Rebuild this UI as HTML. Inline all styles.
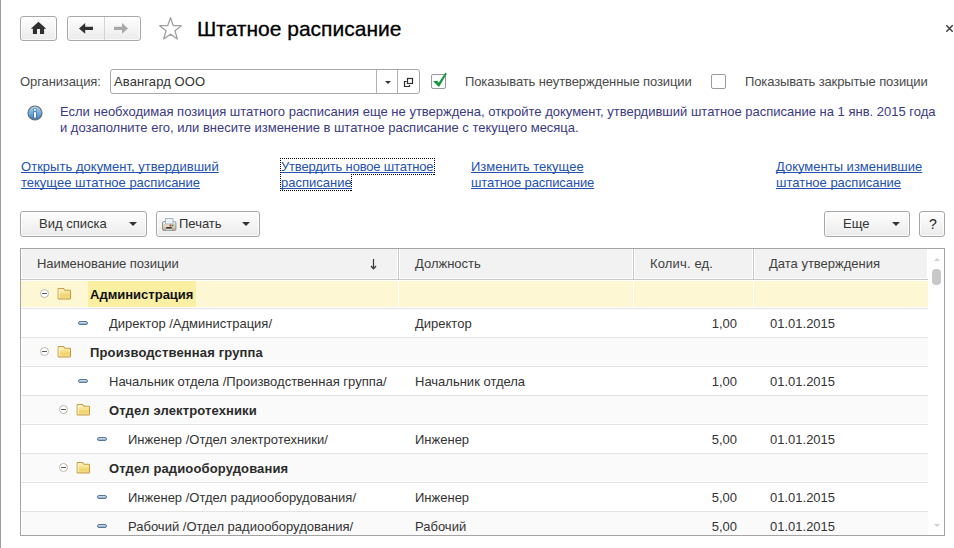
<!DOCTYPE html>
<html><head><meta charset="utf-8">
<style>
*{box-sizing:border-box;margin:0;padding:0}
html,body{width:954px;height:548px;overflow:hidden;background:#fff}
body{position:relative;font-family:"Liberation Sans",sans-serif;font-size:13px;color:#404040}
.a{position:absolute;white-space:nowrap}
.t{position:absolute;white-space:nowrap;line-height:16px;height:16px}
.btn{position:absolute;border:1px solid #a8a8a8;border-radius:3px;background:linear-gradient(#fefefe,#ebebeb);box-shadow:inset 0 0 0 1px rgba(255,255,255,.7)}
.lnk{color:#2351b2;text-decoration:underline;text-underline-offset:1px;text-decoration-skip-ink:none}
.tri{position:absolute;width:0;height:0;border-left:4px solid transparent;border-right:4px solid transparent;border-top:4px solid #333}
#tbl{position:absolute;left:20px;top:248px;width:925px;height:288px;border:1px solid #a4a4a4;overflow:hidden;background:#fff}
.hdr{position:absolute;left:0;top:0;width:907px;height:31px;background:#f2f2f2;border-bottom:1px solid #c8c8c8;box-shadow:inset 1px -1px 0 #fff,inset -1px 0 0 #fff}
.hd{position:absolute;top:0;height:30px;border-left:1px solid #c8c8c8;box-shadow:inset 1px -1px 0 #fff,-1px 0 0 #fff}
.row{position:absolute;left:0;width:907px;height:29px;border-bottom:1px solid #e3e3e3}
.g{background:#fafafa;box-shadow:inset 1px -1px 0 #fff}
.sel{background:#fdf7d3;box-shadow:inset 0 1px 0 #fff,inset 0 -1px 0 #fff}
.cell{position:absolute;top:7px;line-height:16px;white-space:nowrap;color:#333}
.b{font-weight:bold;color:#2a2a2a}
.circ{position:absolute;width:9px;height:9px;border:1px solid #b8b8ac;border-radius:50%;background:#fff}
.circ:after{content:"";position:absolute;left:1px;top:3px;width:5px;height:1px;background:#5a5a5a}
.fold{position:absolute;width:15px;height:12px}
.pill{position:absolute;width:10px;height:4px;border:1px solid #58789a;border-radius:2px;background:linear-gradient(#d4e6f4,#8aa8c4)}
</style></head><body>
<div class="a" style="left:0;top:0;width:1px;height:548px;background:#9c9c9c"></div>

<!-- home -->
<div class="btn" style="left:20px;top:16px;width:37px;height:25px">
  <svg class="a" style="left:10px;top:4px;overflow:visible" width="16" height="14" viewBox="0 0 16 14"><path d="M7.5 0.8 L15.2 7.8 L13.1 7.8 L13.1 12.9 L9 12.9 L9 8 L6 8 L6 12.9 L1.9 12.9 L1.9 7.8 L-0.2 7.8 Z" fill="#303030"/></svg>
</div>
<!-- back/forward -->
<div class="btn" style="left:67px;top:16px;width:74px;height:25px">
  <div class="a" style="left:36px;top:0;width:1px;height:23px;background:#d4d4d4"></div>
  <svg class="a" style="left:11px;top:6px;overflow:visible" width="16" height="12" viewBox="0 0 16 12"><path d="M0 5.4 L6.2 0 L6.2 3.8 L14 3.8 L14 7.1 L6.2 7.1 L6.2 10.8 Z" fill="#303030"/></svg>
  <svg class="a" style="left:45px;top:6px;overflow:visible" width="16" height="12" viewBox="0 0 16 12"><path d="M15 5.4 L9 0 L9 3.8 L1 3.8 L1 7.1 L9 7.1 L9 10.8 Z" fill="#a8a8a8"/></svg>
</div>
<!-- star -->
<svg class="a" style="left:158px;top:16px" width="25" height="24" viewBox="0 0 25 24"><path d="M12.5 1.6 L15.2 9.5 L23.3 9.7 L17 14.8 L19.3 23 L12.5 18.2 L5.7 23 L8 14.8 L1.7 9.7 L9.8 9.5 Z" fill="none" stroke="#a0a0a0" stroke-width="1.3" stroke-linejoin="round"/></svg>
<div class="a" style="left:197px;top:18px;font-size:21px;line-height:22px;color:#000;-webkit-text-stroke:0.3px #000">Штатное расписание</div>
<!-- close -->
<svg class="a" style="left:945px;top:24px" width="9" height="9" viewBox="0 0 9 9"><path d="M1.3 1.3 L7.7 7.7 M7.7 1.3 L1.3 7.7" stroke="#3a3a3a" stroke-width="1.4"/></svg>

<!-- org row -->
<div class="t" style="left:20px;top:74px;letter-spacing:-0.1px;color:#4a4a4a">Организация:</div>
<div class="a" style="left:110px;top:69px;width:310px;height:25px;border:1px solid #a8a8a8;border-radius:3px;background:#fff">
  <div class="t" style="left:3px;top:4px;color:#333;letter-spacing:0.1px">Авангард ООО</div>
  <div class="a" style="left:265px;top:0;width:1px;height:23px;background:#b0b0b0"></div>
  <div class="a" style="left:286px;top:0;width:1px;height:23px;background:#b0b0b0"></div>
  <div class="a" style="left:274px;top:11px;width:0;height:0;border-left:3px solid transparent;border-right:3px solid transparent;border-top:3px solid #333"></div>
  <svg class="a" style="left:292px;top:7px" width="11" height="11" viewBox="0 0 11 11"><rect x="4.5" y="1.5" width="5" height="5" fill="none" stroke="#2e2e2e" stroke-width="1.2"/><path d="M3.6 4.5 H1.5 V9.5 H6.5 V7.9" fill="none" stroke="#2e2e2e" stroke-width="1.2"/></svg>
</div>
<div class="a" style="left:431px;top:74px;width:15px;height:15px;border:1px solid #9a9a9a;border-radius:2px;background:#fff"></div>
<svg class="a" style="left:426px;top:68px" width="26" height="26" viewBox="0 0 26 26"><path d="M7 13 L11.5 13 L12.7 14.8 L19.3 4.8 Q20.8 4.6 20.6 6 L13.5 18.3 Q12.8 19.2 12 18.3 Z" fill="#15983e"/></svg>
<div class="t" style="left:465px;top:74px;letter-spacing:-0.11px;color:#4a4a4a">Показывать неутвержденные позиции</div>
<div class="a" style="left:711px;top:74px;width:15px;height:15px;border:1px solid #9a9a9a;border-radius:2px;background:#fff"></div>
<div class="t" style="left:745px;top:74px;letter-spacing:-0.12px;color:#4a4a4a">Показывать закрытые позиции</div>

<!-- info -->
<svg class="a" style="left:27px;top:105px" width="16" height="16" viewBox="0 0 16 16">
  <defs><linearGradient id="ig" x1="0" y1="0" x2="0" y2="1"><stop offset="0" stop-color="#b4dcf8"/><stop offset="0.55" stop-color="#6aa8dc"/><stop offset="1" stop-color="#3a78b8"/></linearGradient></defs>
  <circle cx="8" cy="8" r="7" fill="url(#ig)" stroke="#6a6a6a" stroke-width="1.2"/>
  <rect x="6.5" y="6.6" width="3" height="6.4" fill="#2a5a90"/><rect x="6.5" y="3.6" width="3" height="2.6" fill="#2a5a90"/><rect x="7" y="7.2" width="2" height="5.4" fill="#fff"/><rect x="7" y="4.1" width="2" height="1.7" fill="#fff"/>
</svg>
<div class="a" style="left:60px;top:104px;line-height:16px;color:#3a3a82">Если необходимая позиция штатного расписания еще не утверждена, откройте документ, утвердивший штатное расписание на 1 янв. 2015 года<br><span style="letter-spacing:-0.015px">и дозаполните его, или внесите изменение в штатное расписание с текущего месяца.</span></div>

<!-- links -->
<div class="a lnk" style="left:21px;top:159px;line-height:16px"><span style="letter-spacing:0.03px">Открыть документ, утвердивший</span><br><span>текущее штатное расписание</span></div>
<div class="a" style="left:280px;top:158px;width:155px;height:1px;background:repeating-linear-gradient(90deg,#000 0 1px,transparent 1px 2px)"></div><div class="a" style="left:434px;top:158px;width:1px;height:17px;background:repeating-linear-gradient(180deg,#000 0 1px,transparent 1px 2px)"></div><div class="a" style="left:351px;top:174px;width:84px;height:1px;background:repeating-linear-gradient(90deg,#000 0 1px,transparent 1px 2px)"></div><div class="a" style="left:351px;top:174px;width:1px;height:17px;background:repeating-linear-gradient(180deg,#000 0 1px,transparent 1px 2px)"></div><div class="a" style="left:280px;top:190px;width:72px;height:1px;background:repeating-linear-gradient(90deg,#000 0 1px,transparent 1px 2px)"></div><div class="a" style="left:280px;top:158px;width:1px;height:33px;background:repeating-linear-gradient(180deg,#000 0 1px,transparent 1px 2px)"></div>
<div class="a lnk" style="left:281px;top:159px;line-height:16px"><span style="letter-spacing:-0.17px">Утвердить новое штатное</span><br><span>расписание</span></div>
<div class="a lnk" style="left:471px;top:159px;line-height:16px"><span>Изменить текущее</span><br><span style="letter-spacing:-0.1px">штатное расписание</span></div>
<div class="a lnk" style="left:776px;top:159px;line-height:16px"><span>Документы изменившие</span><br><span>штатное расписание</span></div>

<!-- buttons -->
<div class="btn" style="left:20px;top:211px;width:127px;height:26px">
  <div class="t" style="left:18px;top:4px;color:#333">Вид списка</div>
  <div class="tri" style="left:108px;top:10px"></div>
</div>
<div class="btn" style="left:156px;top:211px;width:104px;height:26px">
  <svg class="a" style="left:5px;top:6px" width="15" height="14" viewBox="0 0 15 14">
    <defs><linearGradient id="pg" x1="0" y1="0" x2="0" y2="1"><stop offset="0" stop-color="#fafafa"/><stop offset="0.45" stop-color="#e8e0d8"/><stop offset="1" stop-color="#c0a080"/></linearGradient></defs>
    <rect x="0.6" y="3.5" width="13.3" height="9" rx="1.5" fill="url(#pg)" stroke="#8c8c8c" stroke-width="1"/>
    <rect x="3.5" y="0.5" width="7.5" height="5.5" fill="#eef2f6" stroke="#a8b8c8" stroke-width="1"/>
    <rect x="1.2" y="6.2" width="12" height="1" fill="#d8c8b8"/>
    <circle cx="8.4" cy="7.5" r="0.95" fill="#e02828"/><circle cx="10.6" cy="7.5" r="0.95" fill="#28a028"/>
    <rect x="4.2" y="9.2" width="5.6" height="1.4" fill="#111"/>
    <rect x="3.6" y="11" width="7" height="1.6" fill="#fff" stroke="#9a9a9a" stroke-width="0.8"/>
  </svg>
  <div class="t" style="left:22px;top:4px;color:#333">Печать</div>
  <div class="tri" style="left:85px;top:10px"></div>
</div>
<div class="btn" style="left:824px;top:211px;width:86px;height:26px">
  <div class="t" style="left:18px;top:4px;color:#333">Еще</div>
  <div class="tri" style="left:67px;top:10px"></div>
</div>
<div class="btn" style="left:919px;top:211px;width:26px;height:26px">
  <div class="t" style="left:9px;top:4px;color:#222;font-size:14px">?</div>
</div>

<!-- table -->
<div id="tbl">
  <div class="hdr">
    <div class="t" style="left:16px;top:7px;letter-spacing:-0.07px">Наименование позиции</div>
    <svg class="a" style="left:348px;top:8px" width="8" height="14" viewBox="0 0 8 14"><path d="M4.5 2 V11.6" stroke="#383838" stroke-width="1.2"/><path d="M2 9 L4.5 11.8 L7 9" fill="none" stroke="#383838" stroke-width="1.3"/></svg>
    <div class="hd" style="left:377px;width:235px"><div class="t" style="left:16px;top:7px">Должность</div></div>
    <div class="hd" style="left:612px;width:120px"><div class="t" style="left:16px;top:7px;letter-spacing:0.15px">Колич. ед.</div></div>
    <div class="hd" style="left:732px;width:175px"><div class="t" style="left:15px;top:7px">Дата утверждения</div></div>
  </div>
  <div id="rows">
<div class="row sel" style="top:31px"><div class="a" style="left:67px;top:1px;width:108px;height:26px;background:#fbf0a2"></div><div class="a" style="left:377px;top:0;width:1px;height:28px;background:#fff"></div><div class="a" style="left:612px;top:0;width:1px;height:28px;background:#fff"></div><div class="a" style="left:732px;top:0;width:1px;height:28px;background:#fff"></div><div class="circ" style="left:19px;top:9px"></div><svg class="fold" style="left:36px;top:8px" width="15" height="13" viewBox="0 0 15 13"><defs><linearGradient id="fg0" x1="0" y1="0" x2="0" y2="1"><stop offset="0" stop-color="#fffbe0"/><stop offset="0.3" stop-color="#f8e8a0"/><stop offset="0.7" stop-color="#f0d468"/><stop offset="1" stop-color="#f4e0a8"/></linearGradient></defs><path d="M0.6 1.6 Q0.6 0.6 1.6 0.6 H6.4 L8 2.4 H13 Q14 2.4 14 3.4 V11 Q14 12 13 12 H1.6 Q0.6 12 0.6 11 Z" fill="url(#fg0)" stroke="#c89a3c" stroke-width="1.1"/><path d="M1.7 2 V10.8" stroke="#fffce8" stroke-width="0.9"/></svg><div class="cell b" style="left:69px;letter-spacing:0px;color:#111">Администрация</div></div>
<div class="row" style="top:60px"><div class="pill" style="left:57px;top:12px"></div><div class="cell" style="left:88px">Директор /Администрация/</div><div class="cell" style="left:394px">Директор</div><div class="cell" style="right:191px">1,00</div><div class="cell" style="left:749px">01.01.2015</div></div>
<div class="row g" style="top:89px"><div class="circ" style="left:19px;top:9px"></div><svg class="fold" style="left:36px;top:8px" width="15" height="13" viewBox="0 0 15 13"><defs><linearGradient id="fg2" x1="0" y1="0" x2="0" y2="1"><stop offset="0" stop-color="#fffbe0"/><stop offset="0.3" stop-color="#f8e8a0"/><stop offset="0.7" stop-color="#f0d468"/><stop offset="1" stop-color="#f4e0a8"/></linearGradient></defs><path d="M0.6 1.6 Q0.6 0.6 1.6 0.6 H6.4 L8 2.4 H13 Q14 2.4 14 3.4 V11 Q14 12 13 12 H1.6 Q0.6 12 0.6 11 Z" fill="url(#fg2)" stroke="#c89a3c" stroke-width="1.1"/><path d="M1.7 2 V10.8" stroke="#fffce8" stroke-width="0.9"/></svg><div class="cell b" style="left:69px;letter-spacing:0.15px">Производственная группа</div></div>
<div class="row" style="top:118px"><div class="pill" style="left:57px;top:12px"></div><div class="cell" style="left:88px">Начальник отдела /Производственная группа/</div><div class="cell" style="left:394px">Начальник отдела</div><div class="cell" style="right:191px">1,00</div><div class="cell" style="left:749px">01.01.2015</div></div>
<div class="row g" style="top:147px"><div class="circ" style="left:38px;top:9px"></div><svg class="fold" style="left:55px;top:8px" width="15" height="13" viewBox="0 0 15 13"><defs><linearGradient id="fg4" x1="0" y1="0" x2="0" y2="1"><stop offset="0" stop-color="#fffbe0"/><stop offset="0.3" stop-color="#f8e8a0"/><stop offset="0.7" stop-color="#f0d468"/><stop offset="1" stop-color="#f4e0a8"/></linearGradient></defs><path d="M0.6 1.6 Q0.6 0.6 1.6 0.6 H6.4 L8 2.4 H13 Q14 2.4 14 3.4 V11 Q14 12 13 12 H1.6 Q0.6 12 0.6 11 Z" fill="url(#fg4)" stroke="#c89a3c" stroke-width="1.1"/><path d="M1.7 2 V10.8" stroke="#fffce8" stroke-width="0.9"/></svg><div class="cell b" style="left:88px;letter-spacing:0.13px">Отдел электротехники</div></div>
<div class="row" style="top:176px"><div class="pill" style="left:76px;top:12px"></div><div class="cell" style="left:107px">Инженер /Отдел электротехники/</div><div class="cell" style="left:394px">Инженер</div><div class="cell" style="right:191px">5,00</div><div class="cell" style="left:749px">01.01.2015</div></div>
<div class="row g" style="top:205px"><div class="circ" style="left:38px;top:9px"></div><svg class="fold" style="left:55px;top:8px" width="15" height="13" viewBox="0 0 15 13"><defs><linearGradient id="fg6" x1="0" y1="0" x2="0" y2="1"><stop offset="0" stop-color="#fffbe0"/><stop offset="0.3" stop-color="#f8e8a0"/><stop offset="0.7" stop-color="#f0d468"/><stop offset="1" stop-color="#f4e0a8"/></linearGradient></defs><path d="M0.6 1.6 Q0.6 0.6 1.6 0.6 H6.4 L8 2.4 H13 Q14 2.4 14 3.4 V11 Q14 12 13 12 H1.6 Q0.6 12 0.6 11 Z" fill="url(#fg6)" stroke="#c89a3c" stroke-width="1.1"/><path d="M1.7 2 V10.8" stroke="#fffce8" stroke-width="0.9"/></svg><div class="cell b" style="left:88px;letter-spacing:0.13px">Отдел радиооборудования</div></div>
<div class="row" style="top:234px"><div class="pill" style="left:76px;top:12px"></div><div class="cell" style="left:107px">Инженер /Отдел радиооборудования/</div><div class="cell" style="left:394px">Инженер</div><div class="cell" style="right:191px">5,00</div><div class="cell" style="left:749px">01.01.2015</div></div>
<div class="row g" style="top:263px"><div class="pill" style="left:76px;top:12px"></div><div class="cell" style="left:107px">Рабочий /Отдел радиооборудования/</div><div class="cell" style="left:394px">Рабочий</div><div class="cell" style="right:191px">5,00</div><div class="cell" style="left:749px">01.01.2015</div></div>
</div>
  <!-- scrollbar -->
  <div class="a" style="left:913px;top:9px;width:0;height:0;border-left:3px solid transparent;border-right:3px solid transparent;border-bottom:3px solid #d0d0d0"></div>
  <div class="a" style="left:911px;top:20px;width:9px;height:16px;border-radius:4px;background:#c8c8c8"></div>
  <div class="a" style="left:913px;top:275px;width:0;height:0;border-left:3px solid transparent;border-right:3px solid transparent;border-top:3px solid #d0d0d0"></div>
</div>
</body></html>
